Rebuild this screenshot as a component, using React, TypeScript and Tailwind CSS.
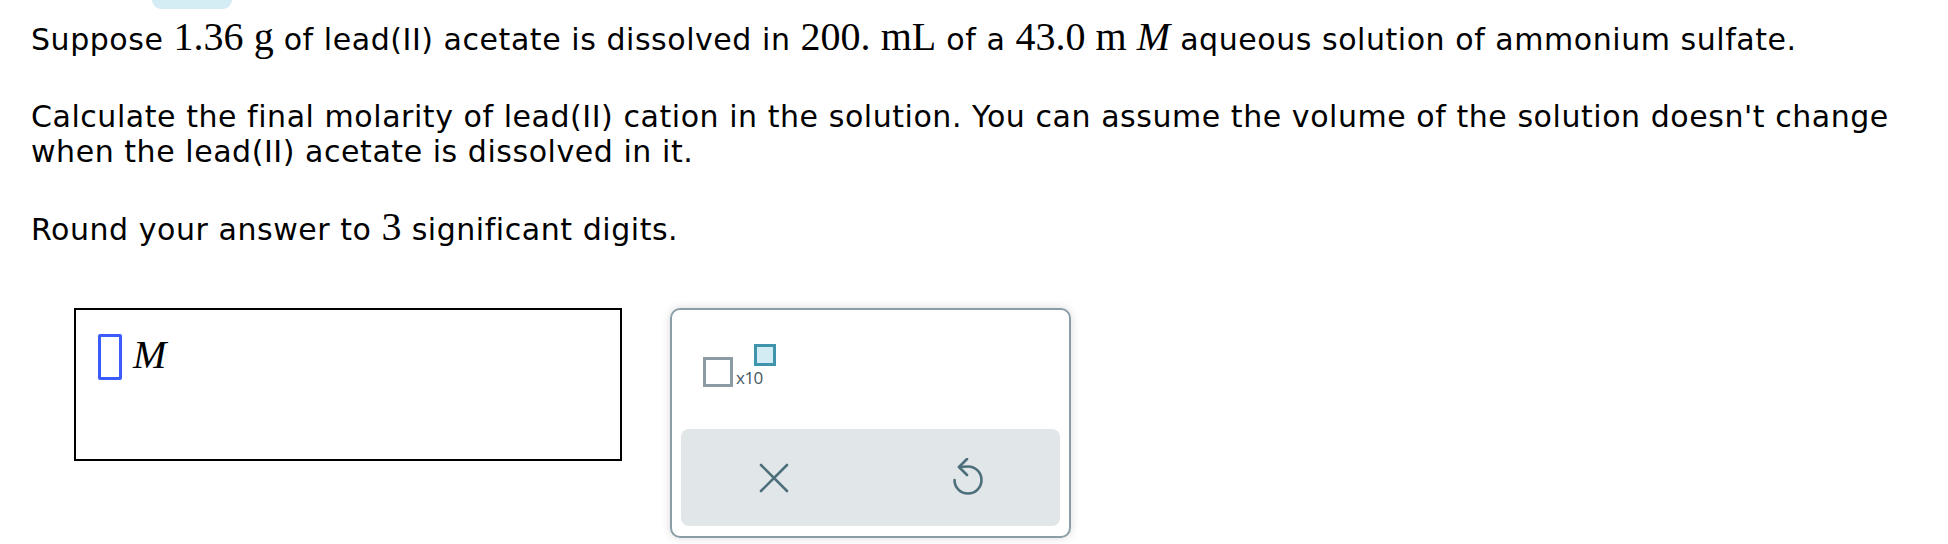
import React from "react";

const M = ({ children, italic }: { children: React.ReactNode; italic?: boolean }) => (
  <span
    className={
      "font-['Liberation_Serif',_'Times_New_Roman',_serif] text-[40px] tracking-normal " + (italic ? "italic" : "")
    }
  >
    {children}
  </span>
);

export default function App() {
  return (
    <div className="relative w-[1948px] h-[544px] overflow-hidden bg-white text-black font-['DejaVu_Sans',_Verdana,_sans-serif]">
      <div className="ml-[152px] w-[80px] h-[9px] bg-[#d4ecf3] rounded-b-[10px]" />
      <div className="pl-[31px] pr-[30px] text-[30px] leading-[35px] tracking-[0.55px]">
        <p className="mt-[10px]">
          Suppose <M>1.36</M> <M>g</M> of lead(II) acetate is dissolved in <M>200.</M> <M>mL</M> of a{" "}
          <M>43.0</M> <M>m</M> <M italic>M</M> aqueous solution of ammonium sulfate.
        </p>
        <p className="mt-[42px]">
          Calculate the final molarity of lead(II) cation in the solution. You can assume the volume of the solution
          doesn't change when the lead(II) acetate is dissolved in it.
        </p>
        <p className="mt-[40px]">
          Round your answer to <M>3</M> significant digits.
        </p>
      </div>
      <div className="flex items-start mt-[61px] pl-[74px] gap-[48px]">
        <div className="w-[548px] h-[153px] border-2 border-black flex items-start pl-[22px] pt-[24px]">
          <div className="w-[24px] h-[46px] border-[3px] border-[#3b5bfd] rounded-[2px]" />
          <span className="ml-[11px] mt-[1px] font-['Liberation_Serif',_'Times_New_Roman',_serif] italic text-[40px] leading-[40px]">
            M
          </span>
        </div>
        <div className="w-[401px] h-[230px] border-2 border-[#8a9ea7] rounded-[10px] shadow-[0_0_10px_rgba(0,0,0,0.15)] flex flex-col px-[9px] pb-[10px]">
          <div className="flex-1 flex items-start pl-[22px] pt-[34px]">
            <div className="w-[30px] h-[30px] mt-[13px] border-[3px] border-[#8b9ca4] bg-white" />
            <span className="mt-[24px] ml-[3px] font-['Open_Sans',_sans-serif] text-[17px] leading-[20px] text-[#44575f] tracking-[-0.5px]">
              x10
            </span>
            <div className="w-[22px] h-[22px] -ml-[9px] border-[3px] border-[#3d94ac] bg-[#d3ecf3]" />
          </div>
          <div className="h-[97px] bg-[#e1e6e9] rounded-[8px] flex items-center">
            <div className="w-1/2 flex justify-center">
              <svg width="30" height="30" viewBox="0 0 30 30" className="ml-[-4px]">
                <path d="M2 2 L28 28 M28 2 L2 28" stroke="#4d6f7b" strokeWidth="2.6" strokeLinecap="round" fill="none" />
              </svg>
            </div>
            <div className="w-1/2 flex justify-center">
              <svg width="40" height="40" viewBox="0 0 40 40" className="ml-[6px]">
                <path
                  d="M11 9 Q15 8.5 20 8.5 A13.5 13.5 0 1 1 6.5 22"
                  stroke="#4d6f7b"
                  strokeWidth="2.6"
                  strokeLinecap="round"
                  fill="none"
                />
                <path d="M19 1 L11 9 L19 17" stroke="#4d6f7b" strokeWidth="2.6" strokeLinecap="round" strokeLinejoin="round" fill="none" />
              </svg>
            </div>
          </div>
        </div>
      </div>
    </div>
  );
}
